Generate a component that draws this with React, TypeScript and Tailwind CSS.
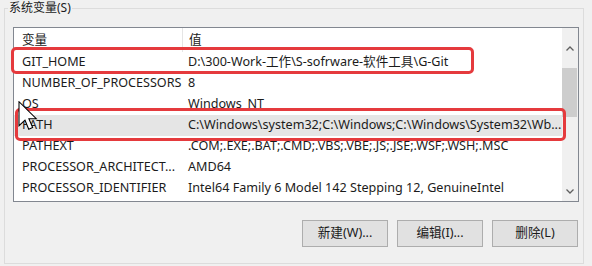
import React from "react";

const rows = [
  { name: "GIT_HOME", value: "D:\\300-Work-工作\\S-sofrware-软件工具\\G-Git" },
  { name: "NUMBER_OF_PROCESSORS", value: "8" },
  { name: "OS", value: "Windows_NT" },
  { name: "PATH", value: "C:\\Windows\\system32;C:\\Windows;C:\\Windows\\System32\\Wb...", active: true },
  { name: "PATHEXT", value: ".COM;.EXE;.BAT;.CMD;.VBS;.VBE;.JS;.JSE;.WSF;.WSH;.MSC" },
  { name: "PROCESSOR_ARCHITECT...", value: "AMD64" },
  { name: "PROCESSOR_IDENTIFIER", value: "Intel64 Family 6 Model 142 Stepping 12, GenuineIntel" },
];

function Chevron({ down = false }: { down?: boolean }) {
  return (
    <svg width="8" height="5" viewBox="0 0 8 5" className="block">
      <polyline
        points={down ? "0.5,0.5 4,4 7.5,0.5" : "0.5,4.5 4,1 7.5,4.5"}
        fill="none"
        stroke="#606060"
        strokeWidth="1.3"
      />
    </svg>
  );
}

function Cursor() {
  return (
    <svg width="20" height="30" viewBox="0 0 13 20" className="absolute left-[18px] top-[101px]">
      <path
        d="M0.5 0.5 L0.5 16.5 L4.5 12.8 L7 18.8 L9.6 17.7 L7.1 11.8 L12 11.8 Z"
        fill="#ffffff"
        stroke="#000000"
        strokeWidth="0.7"
        strokeLinejoin="miter"
      />
    </svg>
  );
}

export default function App() {
  return (
    <div
      className="relative h-[266px] w-[592px] overflow-hidden bg-[#f0f0f0] pb-[2px] pl-[4px] pr-[8px] pt-[8px] text-[12.6px] text-[#1b1b1b]"
      style={{ fontFamily: '"Noto Sans", "Noto Sans CJK SC", sans-serif' }}
    >
      <div className="relative flex h-full flex-col border border-[#dcdcdc] pl-[8px] pr-[4px] pt-[18px]">
        <span className="absolute left-[3px] top-[-10px] bg-[#f0f0f0] px-[1px] text-[12px] leading-[18px]">
          系统变量(S)
        </span>

        <div className="flex h-[175px] border border-[#828790] bg-white">
          <div className="flex flex-1 flex-col">
            <div className="flex h-[24px] items-center">
              <div className="flex h-full w-[169px] items-center border-r border-[#e5e5e5] pl-[8px]">变量</div>
              <div className="pl-[6px]">值</div>
            </div>
            {rows.map((row) => (
              <div
                key={row.name}
                className={`flex h-[21px] items-center whitespace-nowrap ${row.active ? "bg-[#e5e5e5]" : ""}`}
              >
                <div className="w-[169px] pl-[8px]">{row.name}</div>
                <div className="pl-[5px]">{row.value}</div>
              </div>
            ))}
          </div>

          <div className="flex w-[16px] flex-col bg-[#f0f0f0]">
            <div className="flex h-[40px] items-center justify-center">
              <Chevron />
            </div>
            <div className="h-[49px] w-[15px] bg-[#cdcdcd]" />
            <div className="flex-1" />
            <div className="flex h-[20px] items-center justify-center">
              <Chevron down />
            </div>
          </div>
        </div>

        <div className="mt-[18px] flex justify-end gap-[9px] pr-[1px]">
          {["新建(W)...", "编辑(I)...", "删除(L)"].map((label) => (
            <button
              key={label}
              className="flex h-[27px] w-[86px] items-center justify-center border border-[#adadad] bg-[#e1e1e1] text-[12.6px] text-[#1b1b1b]"
            >
              {label}
            </button>
          ))}
        </div>
      </div>

      <div className="absolute left-[11px] top-[47px] h-[27px] w-[463px] rounded-[5px] border-[3px] border-[#e53a3d]" />
      <div className="absolute left-[15px] top-[108px] h-[33px] w-[551px] rounded-[5px] border-[3px] border-[#e53a3d]" />
      <Cursor />
    </div>
  );
}
